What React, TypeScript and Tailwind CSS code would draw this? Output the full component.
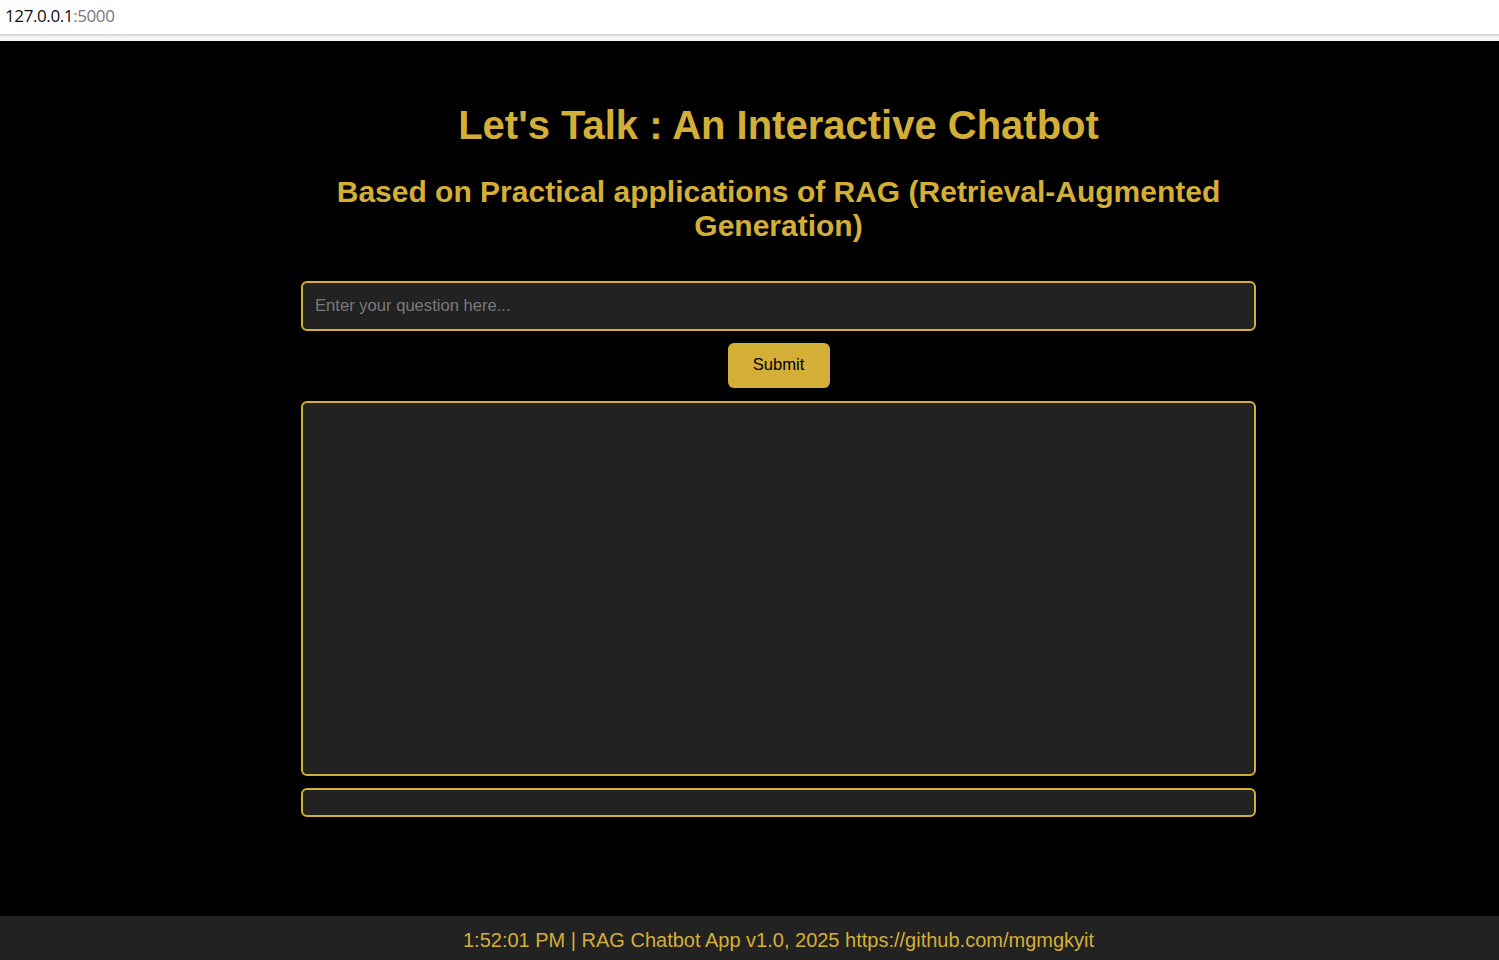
import React, { useState } from 'react';

// ─── Browser chrome strip ────────────────────────────────────────────

function AddressBar() {
    return (
        <div className="h-[41px] w-full bg-white">
            <div className="flex h-[31px] items-center pl-[5px] text-[17px] leading-none font-['Open_Sans','Liberation_Sans',sans-serif] tracking-[-0.4px]">
                <span className="text-[#111]">127.0.0.1</span>
                <span className="text-[#777]">:5000</span>
            </div>
            <div className="h-[3px]" />
            <div className="h-[2px] bg-[#dcdcdc]" />
            <div className="h-[5px] bg-[#f4f4f4]" />
        </div>
    );
}

// ─── App ─────────────────────────────────────────────────────────────

export default function App() {
    const [question, setQuestion] = useState('');
    const [answer, setAnswer] = useState('');

    return (
        <div className="h-[960px] w-full overflow-hidden bg-black font-['Liberation_Sans',Arial,sans-serif]">
            <AddressBar />

            <div className="flex h-[919px] w-[1557px] flex-col">
                <main className="flex flex-1 flex-col items-center pt-[61px]">
                    <h1 className="text-[40px] font-bold leading-[46px] text-[#d4af37]">
                        Let's Talk : An Interactive Chatbot
                    </h1>
                    <h2 className="mt-[27px] w-[955px] text-center text-[30px] font-bold leading-[34px] text-[#d4af37]">
                        Based on Practical applications of RAG (Retrieval-Augmented Generation)
                    </h2>

                    <input
                        type="text"
                        value={question}
                        onChange={(e) => setQuestion(e.target.value)}
                        placeholder="Enter your question here..."
                        className="mt-[38px] h-[50px] w-[955px] rounded-[6px] border-2 border-[#d4af37] bg-[#222] px-[12px] text-[16.6px] text-white placeholder:text-[#7a7a7a] outline-none"
                    />

                    <button
                        type="button"
                        onClick={() => setAnswer(question)}
                        className="mt-[12px] h-[45px] w-[102px] rounded-[6px] bg-[#d4af37] text-[16.6px] text-black"
                    >
                        Submit
                    </button>

                    <div className="mt-[13px] h-[375px] w-[955px] rounded-[6px] border-2 border-[#d4af37] bg-[#222] p-[12px] text-[16px] text-white">
                        {answer}
                    </div>

                    <div className="mt-[12px] h-[29px] w-[955px] rounded-[6px] border-2 border-[#d4af37] bg-[#222]" />
                </main>

                <footer className="flex h-[44px] items-center justify-center bg-[#222] pt-[4px] text-[20px] text-[#d4af37]">
                    1:52:01 PM | RAG Chatbot App v1.0, 2025 https://github.com/mgmgkyit
                </footer>
            </div>
        </div>
    );
}
